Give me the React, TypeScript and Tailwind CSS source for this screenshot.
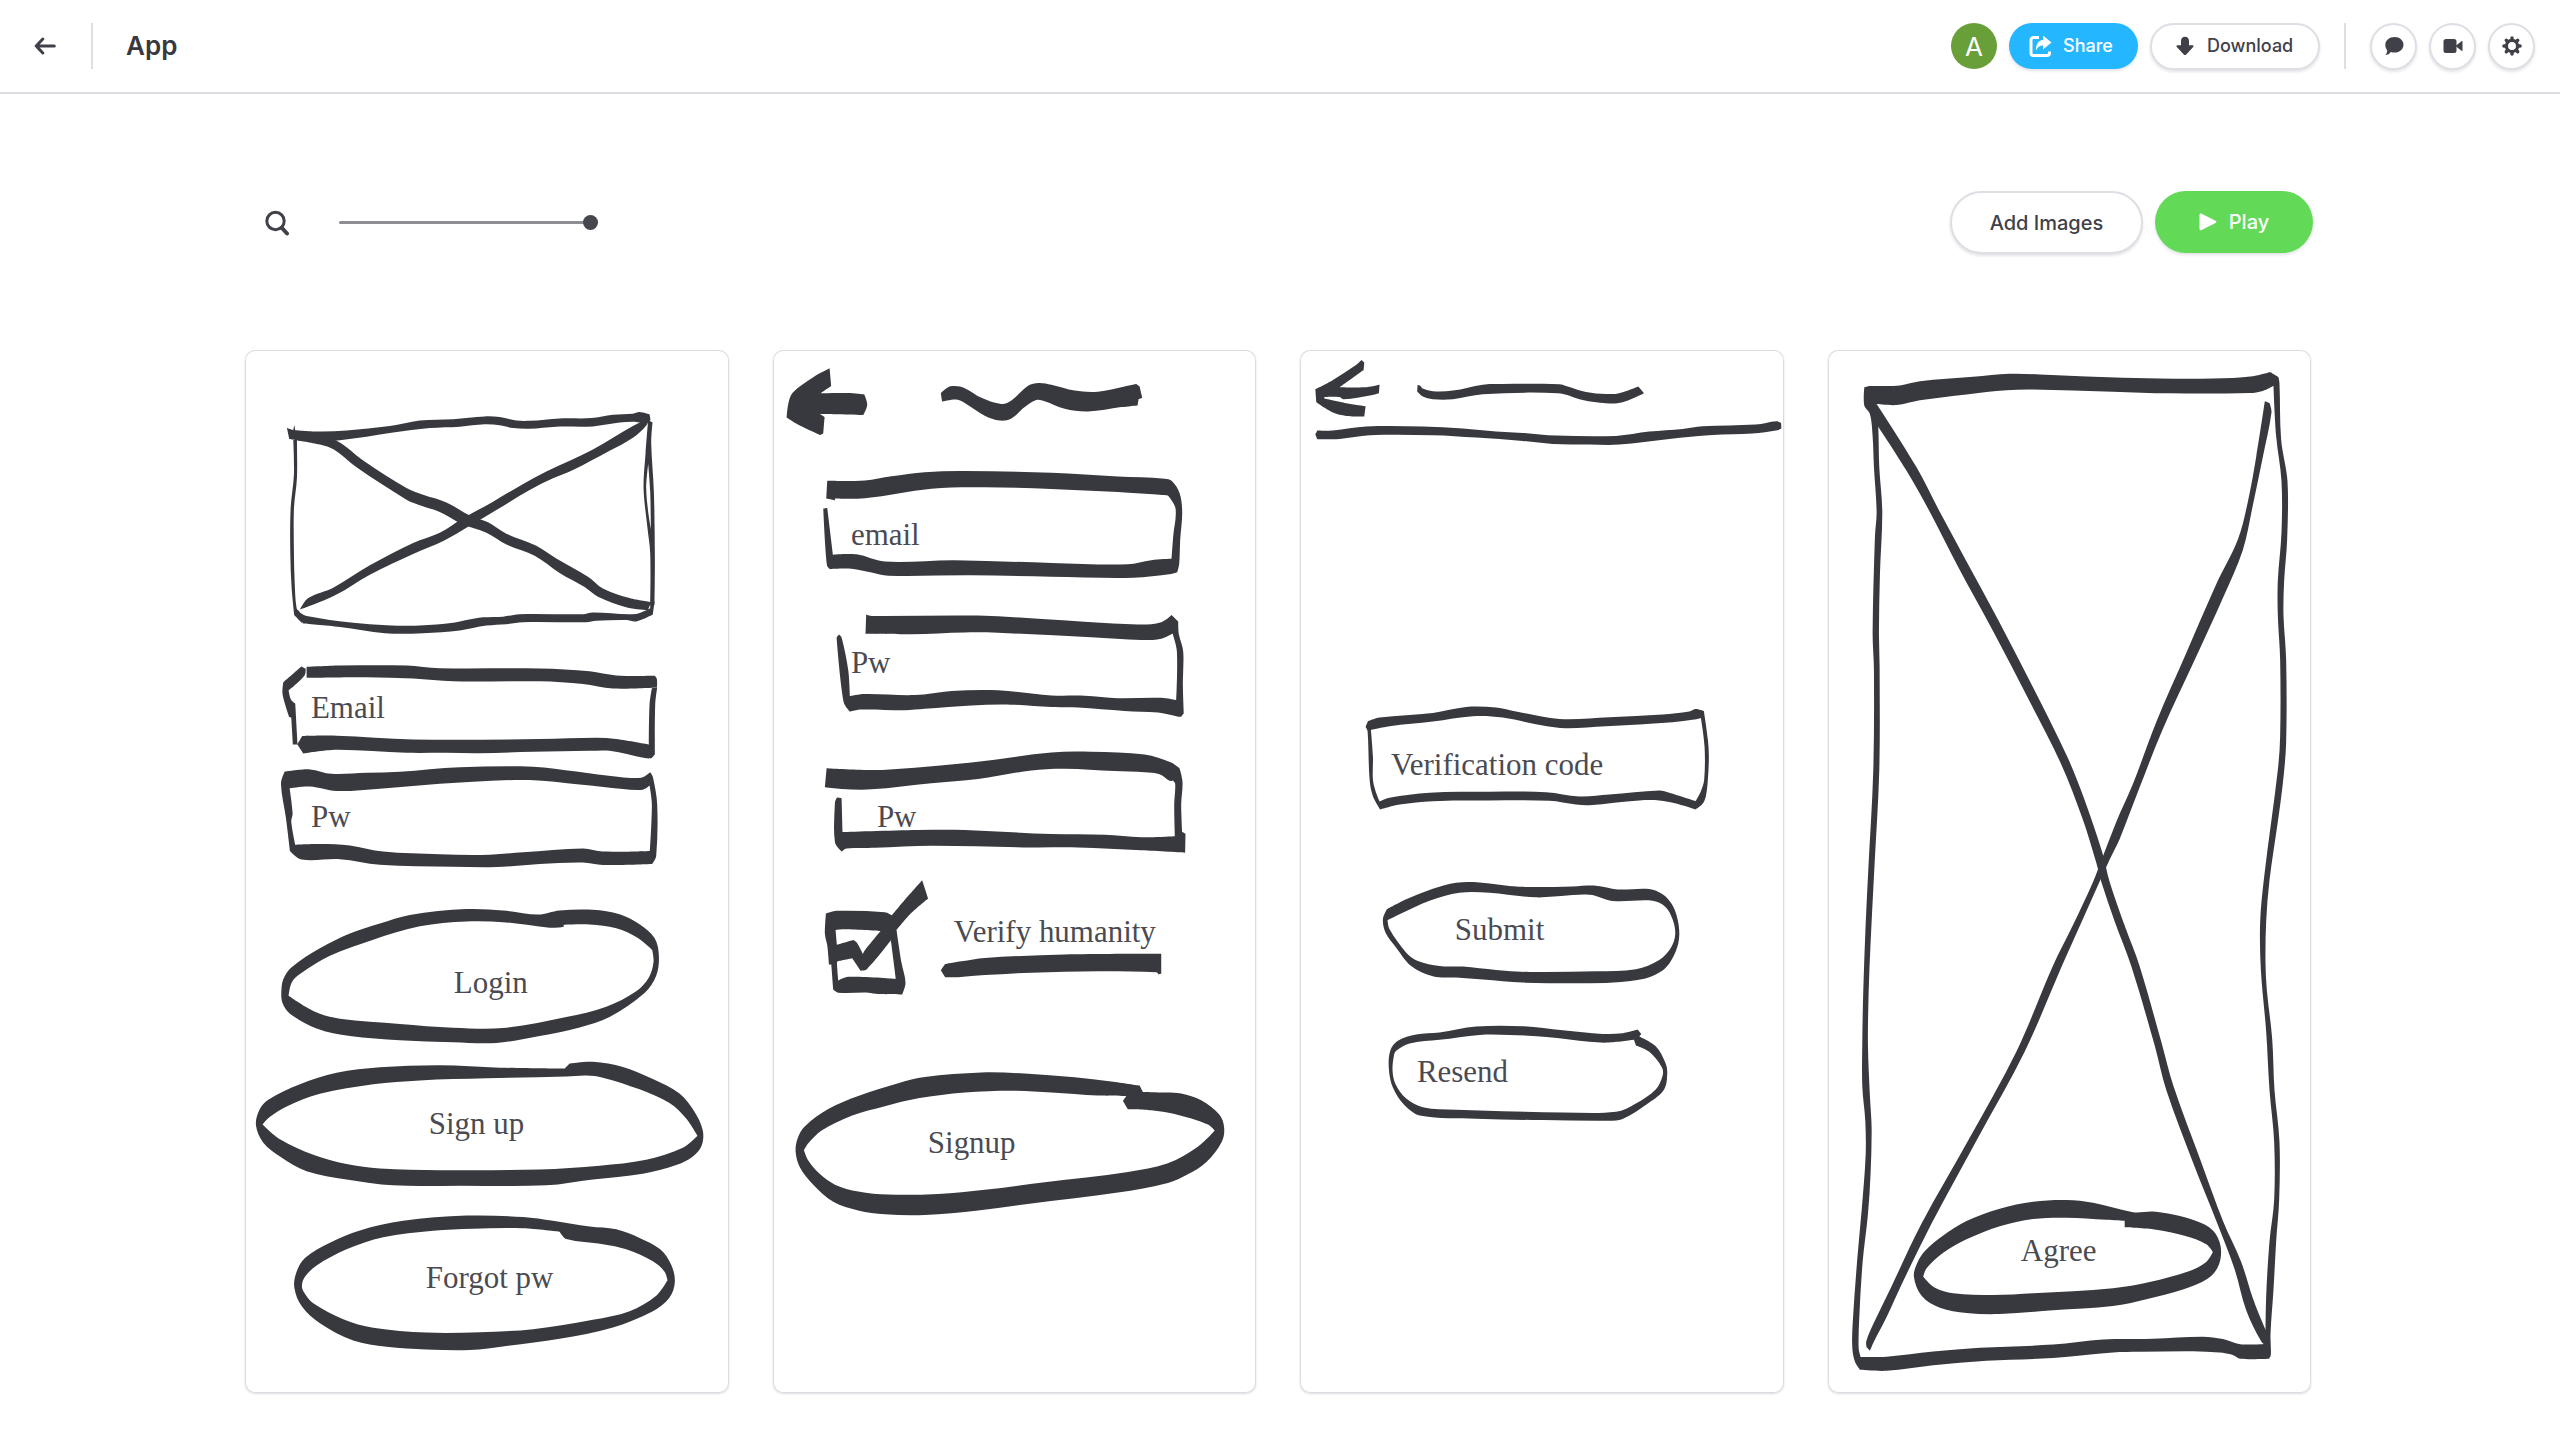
import React, { useState } from 'react';

interface Layer {
  transform: string;
  shapes: string[][];
}

interface Label {
  text: string;
  x: number;
  y: number;
}

interface Screen {
  name: string;
  layers: Layer[];
  labels: Label[];
}

// Anything that turns harder than this (radians) stays a sharp corner
const CORNER = 0.7;

// Turns a list of "x,y" points into a closed pen outline
const toPath = (ring: string) => {
  const pts = ring.split(' ').map((p) => p.split(',').map(Number));
  const n = pts.length;

  const tangents = pts.map((p, i) => {
    const prev = pts[(i + n - 1) % n];
    const next = pts[(i + 1) % n];
    const a = Math.atan2(p[1] - prev[1], p[0] - prev[0]);
    const b = Math.atan2(next[1] - p[1], next[0] - p[0]);
    const turn = Math.abs(Math.atan2(Math.sin(b - a), Math.cos(b - a)));
    if (turn > CORNER) return [0, 0];
    const length = Math.hypot(next[0] - prev[0], next[1] - prev[1]) || 1;
    return [(next[0] - prev[0]) / length, (next[1] - prev[1]) / length];
  });

  let d = `M${pts[0].join(' ')}`;
  for (let i = 0; i < n; i++) {
    const j = (i + 1) % n;
    const reach = Math.hypot(pts[j][0] - pts[i][0], pts[j][1] - pts[i][1]) / 3;
    const c1 = [pts[i][0] + tangents[i][0] * reach, pts[i][1] + tangents[i][1] * reach];
    const c2 = [pts[j][0] - tangents[j][0] * reach, pts[j][1] - tangents[j][1] * reach];
    d += `C${c1.join(' ')} ${c2.join(' ')} ${pts[j].join(' ')}`;
  }
  return `${d}Z`;
};

const screens: Screen[] = [
  {
    name: 'Login',
    layers: [
      {
        transform: 'scale(0.3333 0.3444) translate(-15 -29)',
        shapes: [
          // image placeholder
          ['141,256 160,262 163,247 166,262 240,266 320,263 450,250 540,234 640,230 735,222 780,224 830,234 870,235 960,228 1055,227 1120,217 1180,214 1200,209 1230,216 1233,232 1222,244 1190,238 1140,240 1060,251 950,252 870,258 820,256 780,248 735,245 660,252 570,256 460,269 380,281 300,291 270,293 170,291 148,288'],
          ['170,291 240,304 283,319 350,370 500,464 540,480 600,500 665,534 740,560 800,594 885,627 960,677 1035,718 1075,746 1165,778 1225,785 1235,762 1170,750 1090,722 1045,688 950,635 890,598 800,563 745,530 690,510 620,472 550,450 500,430 370,350 290,293 240,288'],
          ['180,783 215,771 290,740 390,682 520,622 615,582 690,540 770,494 870,436 940,402 1000,378 1110,322 1180,284 1222,246 1225,228 1180,250 1060,318 920,382 840,424 760,470 670,518 600,560 520,590 390,655 280,720 205,750'],
          ['160,290 162,390 152,490 151,620 155,720 163,800 188,824 180,792 170,780 164,700 162,620 162,490 171,400 171,290'],
          ['172,798 190,824 300,834 435,852 550,852 660,844 740,830 800,826 850,820 1040,820 1070,816 1160,814 1190,818 1240,798 1245,760 1232,760 1232,780 1190,796 1060,792 1030,797 840,797 790,804 730,806 680,814 640,822 540,830 440,829 340,822 200,802 180,792'],
          ['1226,232 1239,240 1235,300 1243,440 1246,630 1245,770 1232,770 1232,620 1223,540 1212,430 1218,330', '1226,360 1220,430 1226,500 1234,550 1232,440'],
          // email field
          ['200,950 300,946 500,946 600,954 900,955 1050,963 1130,975 1245,976 1252,985 1252,1010 1120,1013 1030,1000 900,992 640,992 520,984 380,980 200,982'],
          ['184,949 197,955 194,975 146,1018 153,1045 166,1057 173,1176 159,1176 154,1098 148,1096 128,1030 130,995'],
          ['172,1175 187,1151 290,1150 520,1161 900,1160 1070,1156 1130,1160 1228,1176 1230,1060 1237,1012 1253,1010 1247,1060 1246,1205 1236,1216 1220,1216 1110,1194 1050,1194 880,1197 720,1201 620,1200 500,1200 290,1191 190,1202'],
          // password field
          [
            '134,1255 210,1248 275,1261 380,1258 480,1255 660,1242 880,1240 1010,1254 1140,1270 1205,1272 1232,1256 1240,1270 1253,1350 1250,1500 1238,1523 1090,1526 1030,1519 900,1523 770,1532 640,1531 420,1525 300,1509 185,1510 150,1485 138,1390 123,1290',
            '149,1303 158,1375 154,1400 166,1467 240,1465 330,1469 430,1487 600,1495 750,1496 850,1489 1030,1478 1090,1487 1231,1485 1237,1350 1230,1295 1210,1307 1150,1305 1020,1292 870,1279 700,1284 600,1290 420,1304 290,1311 210,1298',
          ],
        ],
      },
      {
        transform: 'scale(0.3333 0.3444) translate(-15 1539)',
        shapes: [
          [
            '124,330 130,290 155,255 240,200 330,157 420,128 510,103 680,86 790,90 895,102 960,90 1060,88 1140,101 1200,130 1245,170 1258,220 1250,280 1215,330 1110,400 1020,430 900,455 770,475 640,473 480,467 330,455 230,433 150,390 128,360',
            '146,338 220,382 300,405 480,420 640,431 790,432 980,400 1100,370 1190,325 1228,285 1242,240 1238,205 1195,170 1130,142 1050,131 972,132 972,138 930,140 800,125 680,122 540,136 400,175 270,222 180,275 155,300',
          ],
          [
            '48,715 58,670 85,640 180,595 290,562 420,546 600,540 780,547 975,550 990,535 1060,530 1150,545 1240,580 1320,622 1365,675 1390,730 1386,775 1360,805 1310,830 1210,855 1060,872 920,889 660,890 460,889 320,872 200,848 120,805 70,765',
            '68,712 120,755 220,800 320,827 420,840 600,845 900,843 1080,832 1220,815 1330,780 1374,745 1340,695 1290,650 1200,610 1090,576 1040,570 980,573 740,578 540,584 400,595 240,623 140,660 90,690',
          ],
          [
            '163,1185 170,1140 195,1100 270,1056 360,1020 490,992 680,977 850,981 940,992 1050,1009 1130,1017 1200,1042 1262,1075 1295,1120 1306,1170 1290,1215 1240,1255 1120,1302 960,1335 800,1356 690,1368 560,1366 440,1358 340,1340 240,1290 185,1240',
            '186,1180 192,1200 220,1232 310,1278 400,1303 560,1317 720,1316 880,1307 1060,1280 1170,1255 1250,1210 1284,1165 1275,1140 1240,1110 1160,1075 1090,1060 980,1045 960,1024 850,1014 700,1015 580,1021 430,1040 320,1075 230,1122 195,1155',
          ],
        ],
      },
    ],
    labels: [
      { text: 'Email', x: 66, y: 368 },
      { text: 'Pw', x: 66, y: 477 },
      { text: 'Login', x: 209, y: 644 },
      { text: 'Sign up', x: 184, y: 785 },
      { text: 'Forgot pw', x: 181, y: 939 },
    ],
  },
  {
    name: 'Signup',
    layers: [
      {
        transform: 'scale(0.3333 0.3444) translate(-24 -29)',
        shapes: [
          ['194,82 199,134 167,155 250,154 298,158 307,188 295,218 165,215 179,224 175,272 166,276 100,246 65,225 70,185 83,153 145,108'],
          ['528,154 550,137 570,134 600,140 650,168 710,186 740,176 790,133 822,125 860,130 930,147 1000,150 1080,135 1115,128 1125,135 1133,168 1122,172 1119,190 1070,195 970,208 900,200 840,178 815,174 780,195 740,228 705,234 660,220 600,183 575,173 532,179'],
          ['187,409 300,408 380,396 480,384 600,381 860,386 1060,397 1200,403 1222,410 1245,445 1253,500 1247,580 1244,650 1238,675 1220,680 1105,691 860,688 620,684 370,685 320,676 260,665 195,666 186,655 175,490 187,488 204,624 275,623 360,644 570,640 860,648 1090,652 1160,640 1221,636 1226,570 1233,490 1210,452 1060,442 860,433 660,428 500,432 300,460 210,461 210,466 184,461'],
          ['304,798 320,802 640,801 820,810 1120,827 1190,820 1221,799 1241,818 1243,855 1256,905 1255,1000 1258,1085 1250,1095 1238,1094 1180,1083 1080,1078 940,1068 860,1067 740,1060 620,1062 480,1072 420,1076 290,1074 255,1080 236,1052 215,865 222,856 230,865 250,960 255,1035 300,1029 450,1032 560,1020 700,1018 860,1033 960,1034 1060,1041 1190,1040 1235,1047 1237,905 1224,853 1190,868 1130,872 980,864 700,851 600,850 440,855 302,854'],
          ['185,1245 320,1250 450,1243 620,1228 860,1199 980,1197 1140,1205 1220,1228 1245,1245 1254,1285 1250,1350 1253,1430 1263,1435 1262,1490 1130,1483 940,1475 800,1475 500,1470 330,1476 245,1478 230,1487 210,1460 210,1345 216,1330 230,1332 233,1430 460,1424 600,1424 860,1436 1020,1438 1130,1445 1231,1442 1229,1350 1232,1290 1225,1280 1215,1281 1185,1262 1140,1256 1050,1253 900,1246 800,1251 640,1276 500,1288 320,1306 230,1305 180,1300'],
        ],
      },
      {
        transform: 'scale(0.3333 0.3444) translate(-24 1481)',
        shapes: [
          // ticked box
          [
            '183,157 215,149 360,153 381,162 420,117 472,60 490,113 440,155 395,205 410,300 422,358 412,392 340,391 310,387 220,387 205,378 199,305 192,305 187,250 180,217',
            '212,205 216,248 265,234 276,242 294,275 300,264 347,208 240,203',
            '216,300 220,352 250,341 393,347 378,235 306,319 287,323 262,287 218,296',
          ],
          ['528,322 541,304 590,296 660,286 900,276 1190,274 1190,332 1182,334 1175,328 1000,325 800,329 660,336 580,342 541,342'],
          [
            '92,850 98,810 120,775 190,725 280,687 400,650 480,632 650,619 780,622 930,633 1040,645 1125,657 1135,676 1180,677 1250,680 1310,700 1365,742 1379,780 1372,820 1325,880 1270,915 1210,940 1060,968 800,1000 640,1020 480,1033 360,1031 280,1020 205,995 145,945 105,895',
            '117,845 130,875 160,910 210,945 280,965 370,974 520,972 660,960 840,938 1090,908 1210,883 1300,835 1351,788 1330,770 1230,740 1160,729 1090,726 1075,702 1085,687 1000,686 860,677 740,672 600,677 460,694 360,717 260,745 170,788 130,825',
          ],
        ],
      },
    ],
    labels: [
      { text: 'email', x: 78, y: 195 },
      { text: 'Pw', x: 78, y: 323 },
      { text: 'Pw', x: 104, y: 477 },
      { text: 'Verify humanity', x: 181, y: 593 },
      { text: 'Signup', x: 155, y: 804 },
    ],
  },
  {
    name: 'Verification',
    layers: [
      {
        transform: 'scale(0.3333) translate(-31 -30)',
        shapes: [
          ['216,60 224,68 222,90 150,142 225,142 270,134 268,160 245,166 162,178 150,171 104,171 104,176 170,190 228,199 224,230 170,228 130,218 80,187 77,148 130,120 198,76'],
          ['384,135 393,138 400,146 430,154 490,152 580,134 640,132 810,133 830,138 890,156 950,162 990,160 1047,140 1064,160 1000,187 950,190 880,180 805,160 580,163 490,178 430,178 400,170 383,155'],
          ['77,284 83,272 130,272 230,260 400,260 520,266 620,275 700,279 800,287 980,288 1080,275 1180,267 1240,259 1400,254 1462,244 1476,250 1477,265 1465,271 1390,281 1270,285 1140,297 990,314 900,314 790,312 700,303 560,293 430,286 240,286 150,297 83,298'],
        ],
      },
      {
        transform: 'scale(0.3333) translate(-31 1020)',
        shapes: [
          [
            '228,112 235,95 270,84 430,70 530,52 620,54 680,66 810,88 960,83 1120,75 1200,66 1218,58 1244,64 1256,150 1259,200 1256,270 1250,320 1240,343 1219,360 1160,342 1110,333 1050,333 900,347 860,345 780,334 600,333 430,335 330,345 272,360 250,320 240,270 234,125',
            '244,121 250,200 250,270 258,305 270,336 300,325 420,310 600,307 770,308 870,321 960,315 1110,303 1140,310 1219,335 1235,305 1245,270 1246,170 1235,85 1215,90 1150,98 950,110 830,116 760,108 640,84 550,80 430,96 300,110',
          ],
          [
            '280,690 292,660 350,630 430,598 500,580 570,579 690,592 850,591 920,589 985,600 1080,599 1120,615 1148,645 1165,690 1170,740 1160,785 1130,835 1090,860 1040,873 950,881 700,880 580,871 500,865 430,861 365,830 320,775 288,730',
            '294,693 300,720 350,790 385,815 450,830 520,832 620,842 720,848 920,846 1040,840 1110,812 1145,775 1158,735 1150,690 1128,652 1090,634 970,635 900,616 740,624 600,610 510,610 420,634 330,675',
          ],
          [
            '298,1140 302,1085 325,1055 380,1036 450,1030 560,1012 700,1011 820,1023 940,1034 1000,1032 1045,1021 1056,1034 1050,1042 1100,1072 1128,1120 1134,1150 1125,1200 1080,1240 1000,1290 960,1295 760,1293 560,1289 395,1280 345,1248 310,1195',
            '309,1145 318,1185 350,1228 400,1254 500,1262 640,1266 820,1270 980,1268 1040,1243 1100,1200 1120,1160 1118,1135 1080,1088 1040,1069 1034,1052 960,1060 900,1058 780,1044 660,1037 570,1037 450,1052 360,1063 320,1085 313,1100',
          ],
        ],
      },
    ],
    labels: [
      { text: 'Verification code', x: 91, y: 425 },
      { text: 'Submit', x: 155, y: 591 },
      { text: 'Resend', x: 117, y: 733 },
    ],
  },
  {
    name: 'Agreement',
    layers: [
      {
        transform: 'scale(0.3333 0.3444) translate(-24 -29)',
        shapes: [
          [
            '133,138 150,134 240,132 300,120 460,107 570,98 660,100 800,106 1020,112 1180,112 1300,105 1352,93 1377,108 1380,125 1385,290 1404,410 1403,580 1394,700 1392,800 1400,930 1400,1170 1390,1290 1375,1400 1350,1570 1340,1690 1338,1810 1342,1890 1358,2030 1365,2180 1380,2330 1379,2500 1370,2620 1362,2760 1353,2890 1354,2950 1348,2961 1262,2961 1240,2950 1200,2943 1120,2939 960,2941 880,2943 700,2959 500,2967 340,2980 200,2996 120,2993 105,2970 97,2930 98,2860 112,2670 125,2530 137,2370 136,2270 127,2170 127,2040 130,1890 137,1700 145,1540 160,1250 162,960 158,850 165,570 170,500 162,370 158,280 150,215 133,190',
            '175,250 178,370 187,500 180,680 177,850 179,950 178,1250 163,1540 152,1750 146,1900 144,2050 150,2200 155,2290 152,2420 144,2540 128,2680 118,2840 116,2930 122,2956 200,2955 340,2940 480,2929 700,2920 850,2905 1000,2903 1150,2897 1210,2904 1262,2919 1338,2918 1340,2780 1350,2620 1364,2500 1364,2330 1350,2180 1340,2010 1324,1830 1322,1690 1334,1560 1375,1250 1382,1150 1382,930 1375,800 1375,700 1386,560 1386,410 1370,280 1362,133 1330,148 1290,154 1050,155 880,150 640,144 560,146 440,158 300,175 230,189 170,186',
          ],
          ['150,215 260,380 330,500 415,660 522,850 624,1040 723,1230 788,1390 830,1520 845,1575 885,1690 935,1820 1005,2050 1040,2180 1120,2390 1190,2560 1245,2700 1280,2820 1325,2910 1348,2930 1350,2900 1335,2870 1300,2785 1265,2680 1210,2560 1145,2390 1062,2170 1025,2040 960,1820 918,1710 870,1575 848,1490 792,1330 742,1210 640,1010 536,815 438,640 360,500 290,370 170,186'],
          ['1336,178 1310,340 1285,470 1255,580 1190,710 1100,910 1010,1110 940,1290 890,1400 850,1500 820,1575 755,1710 700,1818 590,2068 450,2318 305,2568 215,2750 160,2860 139,2910 140,2928 150,2938 160,2915 200,2840 245,2745 335,2568 475,2318 615,2068 727,1818 800,1660 870,1510 900,1450 960,1300 1030,1130 1130,920 1210,750 1270,610 1300,480 1330,340 1356,210 1350,183'],
        ],
      },
      {
        transform: 'scale(0.3333 0.3444) translate(-24 1539)',
        shapes: [
          [
            '282,1155 292,1115 315,1080 370,1035 440,993 540,957 640,937 740,932 820,940 940,967 1000,965 1060,974 1130,993 1180,1020 1203,1065 1198,1120 1165,1160 1090,1192 980,1220 880,1240 700,1252 540,1263 440,1260 360,1245 305,1210',
            '310,1155 345,1187 400,1203 520,1208 640,1203 880,1188 990,1170 1110,1138 1160,1112 1180,1083 1160,1060 1100,1037 1010,1018 915,1011 915,992 860,989 740,983 640,987 540,1008 440,1046 370,1085 320,1130',
          ],
        ],
      },
    ],
    labels: [{ text: 'Agree', x: 193, y: 912 }],
  },
];

const ScreenCard = ({ screen }: { screen: Screen }) => (
  <li className="rounded-[10px] bg-white shadow-[inset_0_0_0_1px_#dcdce2,0_1px_2px_rgba(60,60,75,0.18)]">
    <svg viewBox="0 0 484 1044" className="block h-auto w-full" role="group" aria-label={screen.name}>
      {screen.layers.map((layer) => (
        <g key={layer.transform} transform={layer.transform} fill="#38393f">
          {layer.shapes.map((rings, i) => (
            <path key={i} fillRule="evenodd" d={rings.map(toPath).join('')} />
          ))}
        </g>
      ))}
      <g fill="#4a4b52" className="font-['Liberation_Serif',serif] text-[31px]">
        {screen.labels.map((label) => (
          <text key={`${label.text}-${label.y}`} x={label.x} y={label.y}>
            {label.text}
          </text>
        ))}
      </g>
    </svg>
  </li>
);

const RoundButton = ({ label, children }: { label: string; children: React.ReactNode }) => (
  <button
    type="button"
    aria-label={label}
    className="flex size-[47px] items-center justify-center rounded-full border-2 border-[#dedee5] bg-white shadow-[0_2px_3px_rgba(60,60,75,0.14)]"
  >
    {children}
  </button>
);

const GEAR_TEETH = [0, 45, 90, 135, 180, 225, 270, 315];

const App: React.FC = () => {
  const [zoom, setZoom] = useState(100);

  return (
    <div className="min-h-screen bg-white font-['Inter',sans-serif] text-[#404148]">
      <header className="flex h-[94px] items-center justify-between border-b-2 border-[#dcdce3] pr-[25px] pl-[34px]">
        <div className="flex items-center">
          <a href="#" aria-label="Back" className="block">
            <svg width="22" height="18" viewBox="0 0 22 18" fill="none" stroke="#404148" strokeWidth="3" strokeLinecap="round" strokeLinejoin="round">
              <path d="M20.3 9H2.4M8.8 2 2.2 9l6.6 7" />
            </svg>
          </a>
          <div className="mr-[33px] ml-[35px] h-[46px] w-[2px] bg-[#dedee5]" />
          <h1 className="text-[26px] leading-8 font-semibold text-[#38393f]">App</h1>
        </div>

        <div className="flex items-center gap-3">
          <div className="flex size-[46px] items-center justify-center rounded-full bg-[#689f38] text-[26px] text-white">A</div>
          <button type="button" className="flex h-[46px] w-[129px] items-center gap-[11px] rounded-full bg-[#24b6ff] pl-5 text-lg font-medium text-white shadow-[0_2px_3px_rgba(60,60,75,0.14)]">
            <svg width="23" height="23" viewBox="0 0 23 23" fill="none">
              <path d="M10 2.5H4.5a2.5 2.5 0 0 0-2.5 2.5v13a2.5 2.5 0 0 0 2.5 2.5H18a2.5 2.5 0 0 0 2.5-2.5v-1.5" stroke="#fff" strokeWidth="3" />
              <path d="M14 .5 22.5 7.500 14 14.500v-4c-3.500 0-5.500 1.500-7 5-.4-5.500 2-10 7-10.500Z" fill="#fff" />
            </svg>
            Share
          </button>
          <button type="button" className="flex h-[47px] w-[170px] items-center gap-3 rounded-full border-2 border-[#dedee5] bg-white pl-[23px] text-lg font-medium shadow-[0_2px_3px_rgba(60,60,75,0.14)]">
            <svg width="20" height="20" viewBox="0 0 20 20" fill="#404148">
              <path d="M10 .8c2.600 0 4 1.700 4 4.200v4.200h3.600c1 0 1.300.9.600 1.700l-7 7.600c-.7.8-1.700.8-2.400 0l-7-7.600c-.7-.8-.4-1.700.6-1.700H6V5C6 2.500 7.400.8 10 .8Z" />
            </svg>
            Download
          </button>
          <div className="mx-3 h-[46px] w-[2px] bg-[#dedee5]" />
          <RoundButton label="Comments">
            <svg width="20" height="20" viewBox="0 0 20 20" fill="#404148">
              <path d="M10.600 1C15.700 1 19.500 4.400 19.500 8.800s-3.800 7.800-8.900 7.800c-1.400 0-2.700-.2-3.800-.7C5.500 17.700 3.500 19 1.500 19c1-1.300 1.600-2.800 1.700-4.800C2 12.800 1.300 10.900 1.300 8.800 1.300 4.400 5.500 1 10.600 1Z" />
            </svg>
          </RoundButton>
          <RoundButton label="Video">
            <svg width="20" height="20" viewBox="0 0 20 20" fill="#404148">
              <rect x="0.500" y="3" width="13" height="14" rx="2.500" />
              <path d="m12.500 10 6-4.800c.6-.4 1-.2 1 .5v8.600c0 .7-.4.900-1 .5Z" />
            </svg>
          </RoundButton>
          <RoundButton label="Settings">
            <svg width="20" height="20" viewBox="0 0 20 20" stroke="#404148" fill="none">
              <circle cx="10" cy="10" r="5.600" strokeWidth="3.200" />
              {GEAR_TEETH.map((angle) => (
                <path key={angle} d="M10 4V1.900" strokeWidth="3.400" strokeLinecap="round" transform={`rotate(${angle} 10 10)`} />
              ))}
            </svg>
          </RoundButton>
        </div>
      </header>

      <main className="pb-[44px]">
        <div className="flex items-center justify-between pt-[97px] pr-[247px] pb-[96px] pl-[264px]">
          <label className="flex items-center gap-[49px]">
            <svg width="26" height="26" viewBox="0 0 26 26" fill="none" stroke="#404148" aria-label="Zoom">
              <circle cx="11.500" cy="11" r="8.700" strokeWidth="3" />
              <path d="m18 18 5 5.500" strokeWidth="4" strokeLinecap="round" />
            </svg>
            <input
              type="range"
              min={10}
              max={100}
              value={zoom}
              onChange={(e) => setZoom(Number(e.target.value))}
              className="h-4 w-[259px] appearance-none bg-transparent [&::-webkit-slider-runnable-track]:h-[3px] [&::-webkit-slider-runnable-track]:rounded-full [&::-webkit-slider-runnable-track]:bg-[#8d8e93] [&::-webkit-slider-thumb]:-mt-[6px] [&::-webkit-slider-thumb]:size-[15px] [&::-webkit-slider-thumb]:appearance-none [&::-webkit-slider-thumb]:rounded-full [&::-webkit-slider-thumb]:bg-[#46474d]"
            />
          </label>

          <div className="flex gap-3">
            <button type="button" className="h-[63px] w-[193px] rounded-full border-2 border-[#dedee5] bg-white text-xl font-medium shadow-[0_2px_3px_rgba(60,60,75,0.14)]">
              Add Images
            </button>
            <button type="button" className="flex h-[62px] w-[158px] items-center justify-center gap-3 rounded-full bg-[#62d957] text-xl font-medium text-white shadow-[0_2px_3px_rgba(60,60,75,0.14)]">
              <svg width="18" height="18" viewBox="0 0 18 18" fill="#fff">
                <path d="M.5 2C.5.600 1.500.200 2.700.800l13.800 7c1.200.6 1.200 1.700 0 2.300l-13.800 7C1.500 17.700.5 17.300.5 16Z" />
              </svg>
              Play
            </button>
          </div>
        </div>

        <ul className="grid grid-cols-4 gap-11 pr-[249px] pl-[245px]">
          {screens.map((screen) => (
            <ScreenCard key={screen.name} screen={screen} />
          ))}
        </ul>
      </main>
    </div>
  );
};

export default App;
